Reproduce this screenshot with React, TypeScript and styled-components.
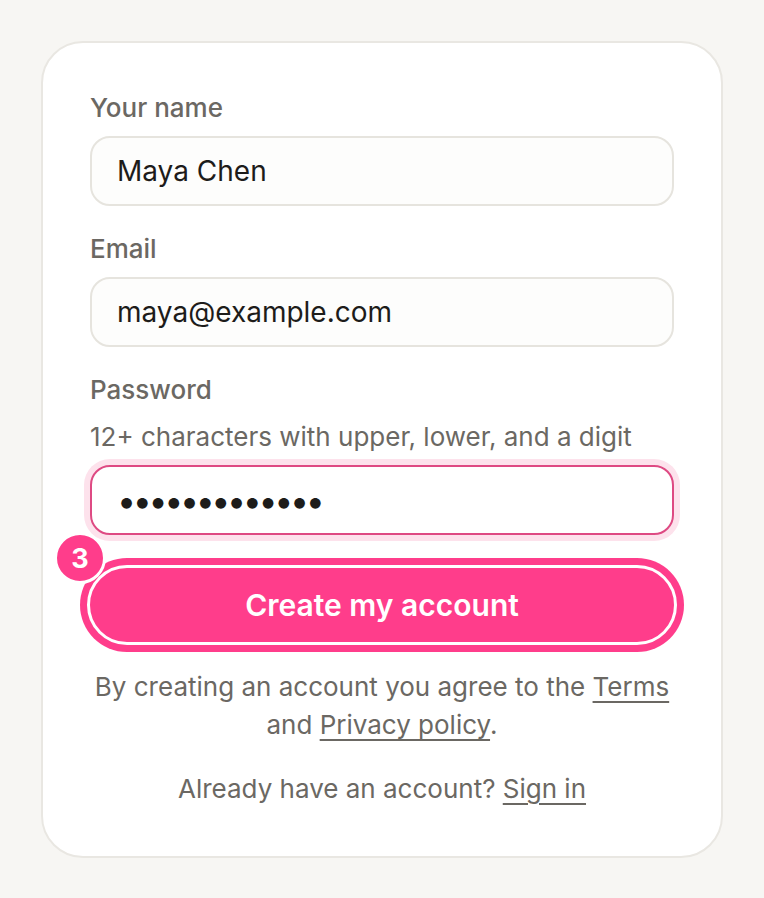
import React from "react";
import styled, { createGlobalStyle } from "styled-components";

const pink = "#ff3d8b";
const muted = "#6b6863";

const GlobalStyle = createGlobalStyle`
  html, body {
    margin: 0;
    padding: 0;
    background: #f7f6f3;
  }
  body {
    font-family: Inter, "Noto Sans", sans-serif;
    -webkit-font-smoothing: antialiased;
  }
`;

const Page = styled.div`
  padding: 41px;
  min-height: 100vh;
  box-sizing: border-box;
`;

const Card = styled.form`
  width: 682px;
  box-sizing: border-box;
  background: #fff;
  border: 2px solid #e9e7e2;
  border-radius: 42px;
  padding: 50px 47px 48px;
  display: flex;
  flex-direction: column;
`;

const Field = styled.div`
  display: flex;
  flex-direction: column;
  gap: 13px;
  & + & {
    margin-top: 28px;
  }
`;

const Label = styled.label`
  font-size: 26px;
  line-height: 30px;
  font-weight: 500;
  color: ${muted};
`;

const Hint = styled.span`
  font-size: 26px;
  line-height: 30px;
  color: ${muted};
  margin-top: 4px;
`;

const Input = styled.input<{ $focused?: boolean }>`
  box-sizing: border-box;
  width: 100%;
  height: 70px;
  padding: 0 25px;
  border-radius: 20px;
  border: 2px solid ${({ $focused }) => ($focused ? "#de4a83" : "#e6e4de")};
  background: ${({ $focused }) => ($focused ? "#fff" : "#fdfdfc")};
  box-shadow: ${({ $focused }) => ($focused ? "0 0 0 6px #fde2ec" : "none")};
  font-family: Inter, "Noto Sans", sans-serif;
  font-size: 28px;
  color: #1d1c1a;
  outline: none;
  &[type="password"] {
    font-size: 34px;
    letter-spacing: -3.4px;
  }
`;

const ButtonWrap = styled.div`
  position: relative;
  margin: 30px -3px 0;
`;

const SubmitButton = styled.button`
  width: 100%;
  height: 80px;
  box-sizing: border-box;
  border: 3px solid #fff;
  border-radius: 40px;
  background: ${pink};
  box-shadow: 0 0 0 7px ${pink};
  color: #fff;
  font-family: Inter, "Noto Sans", sans-serif;
  font-size: 30px;
  font-weight: 600;
  cursor: pointer;
`;

const StepBadge = styled.span`
  position: absolute;
  left: -33px;
  top: -33px;
  width: 52px;
  height: 52px;
  box-sizing: border-box;
  border-radius: 50%;
  border: 3px solid #fff;
  background: ${pink};
  color: #fff;
  font-size: 27px;
  font-weight: 700;
  display: flex;
  align-items: center;
  justify-content: center;
`;

const Note = styled.p<{ $gap: number }>`
  margin: ${({ $gap }) => $gap}px 0 0;
  text-align: center;
  font-size: 26px;
  line-height: 38px;
  color: ${muted};
`;

const Link = styled.a`
  color: ${muted};
  text-decoration: underline;
  text-decoration-thickness: 2px;
  text-underline-offset: 5px;
  cursor: pointer;
`;

export default function App() {
  return (
    <>
      <GlobalStyle />
      <Page>
        <Card onSubmit={(e) => e.preventDefault()}>
          <Field>
            <Label htmlFor="name">Your name</Label>
            <Input id="name" type="text" defaultValue="Maya Chen" />
          </Field>
          <Field>
            <Label htmlFor="email">Email</Label>
            <Input id="email" type="email" defaultValue="maya@example.com" />
          </Field>
          <Field>
            <Label htmlFor="password">Password</Label>
            <Hint>12+ characters with upper, lower, and a digit</Hint>
            <Input id="password" type="password" defaultValue="Mayachen20251" $focused />
          </Field>
          <ButtonWrap>
            <StepBadge>3</StepBadge>
            <SubmitButton type="submit">Create my account</SubmitButton>
          </ButtonWrap>
          <Note $gap={23}>
            By creating an account you agree to the <Link>Terms</Link>
            <br />
            and <Link>Privacy policy</Link>.
          </Note>
          <Note $gap={26}>
            Already have an account? <Link>Sign in</Link>
          </Note>
        </Card>
      </Page>
    </>
  );
}
